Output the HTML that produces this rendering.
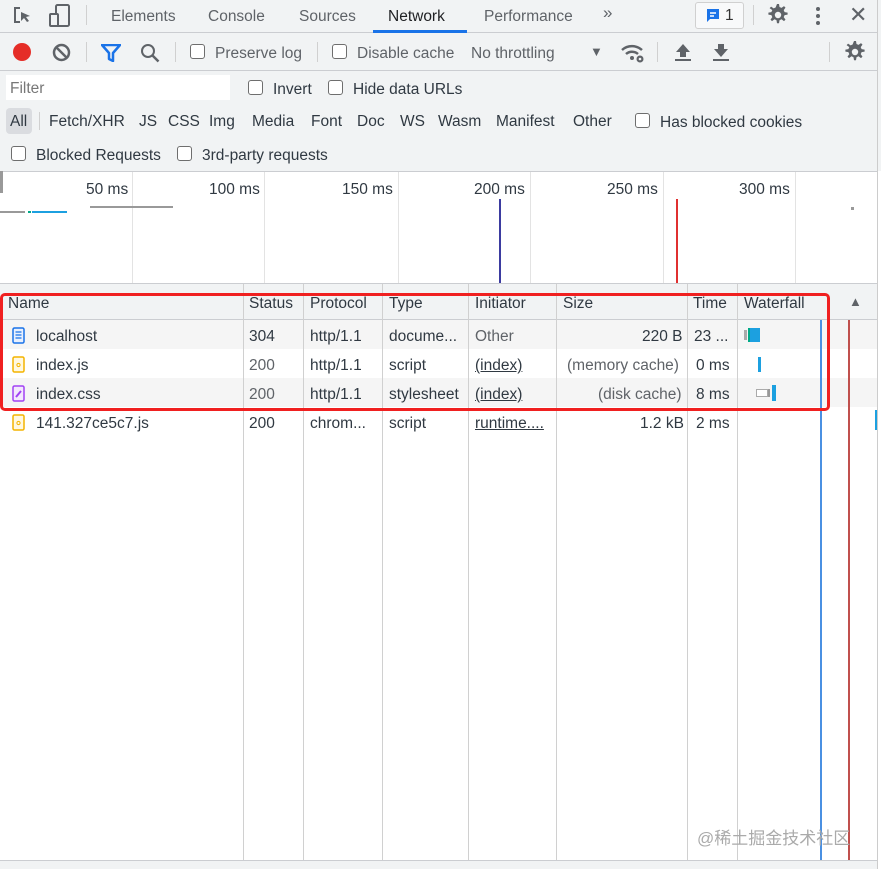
<!DOCTYPE html>
<html><head><meta charset="utf-8"><style>
*{box-sizing:border-box;margin:0;padding:0}
body{width:881px;height:869px;background:#fff;font-family:"Liberation Sans","Noto Sans CJK SC",sans-serif;font-size:15.5px;color:#303942;position:relative;overflow:hidden}
.a{position:absolute;white-space:nowrap}
.t{margin-top:1px}
.g{color:#5f6368}
.cb{position:absolute;width:15px;height:15px;border:1.5px solid #6e6e6e;border-radius:3px;background:#fff}
.vl{position:absolute;width:1px;background:#d0d0d0}
.hl{position:absolute;height:1px;background:#cbcdd1}
u{text-decoration:underline}
</style></head><body>
<svg width="0" height="0" style="position:absolute"><defs><g id="gear"><path d="M10 0l2 0 .5 3 2 .9 2.5-1.8 1.5 1.5-1.8 2.5.9 2 3 .5v2l-3 .5-.9 2 1.8 2.5-1.5 1.5-2.5-1.8-2 .9-.5 3h-2l-.5-3-2-.9-2.5 1.8-1.5-1.5 1.8-2.5-.9-2-3-.5v-2l3-.5.9-2L2.6 4.1 4.1 2.6l2.5 1.8 2-.9z" fill="#5f6368"/><circle cx="11" cy="11" r="3.2" fill="#f1f3f4"/></g></defs></svg>
<div class="a" style="left:0;top:0;width:881px;height:171px;background:#f1f3f4"></div>
<div class="hl" style="left:0;top:32px;width:877px"></div>
<div class="hl" style="left:0;top:70px;width:877px"></div>
<div class="vl" style="left:877px;top:0;height:869px;background:#ccc"></div>
<svg class="a" style="left:12px;top:5px" width="22" height="22" viewBox="0 0 22 22"><path d="M8 3H3v14h5" fill="none" stroke="#5f6368" stroke-width="2"/><path d="M9 7l9 4-4 1 3 4-2 1-3-4-3 3z" fill="#5f6368"/></svg>
<svg class="a" style="left:48px;top:4px" width="24" height="24" viewBox="0 0 24 24"><rect x="8" y="1" width="13" height="21" rx="1.5" fill="none" stroke="#5f6368" stroke-width="2"/><rect x="2" y="10" width="8" height="12" rx="1" fill="#f1f3f4" stroke="#5f6368" stroke-width="2"/></svg>
<div class="vl" style="left:86px;top:5px;height:20px"></div>
<div class="a g t" style="left:111px;top:7px">Elements</div>
<div class="a g t" style="left:208px;top:7px">Console</div>
<div class="a g t" style="left:299px;top:7px">Sources</div>
<div class="a t" style="left:388px;top:7px;color:#202124">Network</div>
<div class="a" style="left:373px;top:30px;width:94px;height:3px;background:#1a73e8"></div>
<div class="a g t" style="left:484px;top:7px">Performance</div>
<div class="a g" style="left:603px;top:3px;font-size:17px">»</div>
<div class="a" style="left:695px;top:2px;width:49px;height:27px;border:1px solid #d0d0d0;border-radius:3px;background:#f8f9fa"></div>
<svg class="a" style="left:705px;top:8px" width="16" height="16" viewBox="0 0 16 16"><path d="M2 1h12v10H5l-3 3z" fill="#1a73e8"/><path d="M5 5h6M5 8h4" stroke="#fff" stroke-width="1.5"/></svg>
<div class="a t" style="left:725px;top:6px;color:#333">1</div>
<div class="vl" style="left:753px;top:5px;height:20px"></div>
<svg class="a" style="left:767px;top:4px" width="22" height="22" viewBox="0 0 22 22"><use href="#gear"/></svg>
<svg class="a" style="left:814px;top:5px" width="8" height="22" viewBox="0 0 8 22"><circle cx="4" cy="4" r="2" fill="#5f6368"/><circle cx="4" cy="11" r="2" fill="#5f6368"/><circle cx="4" cy="18" r="2" fill="#5f6368"/></svg>
<div class="a g" style="left:849px;top:2px;font-size:22px">✕</div>
<div class="a" style="left:13px;top:43px;width:18px;height:18px;border-radius:50%;background:#e52d27"></div>
<svg class="a" style="left:52px;top:43px" width="19" height="19" viewBox="0 0 19 19"><circle cx="9.5" cy="9.5" r="7.5" fill="none" stroke="#5f6368" stroke-width="2.5"/><path d="M4.5 4.5l10 10" stroke="#5f6368" stroke-width="2.5"/></svg>
<div class="vl" style="left:86px;top:42px;height:20px"></div>
<svg class="a" style="left:101px;top:44px" width="20" height="18" viewBox="0 0 20 18"><path d="M1 1h18l-7 8v8l-4-2V9z" fill="none" stroke="#1a73e8" stroke-width="2.5" stroke-linejoin="round"/></svg>
<svg class="a" style="left:140px;top:43px" width="20" height="20" viewBox="0 0 20 20"><circle cx="8" cy="8" r="6" fill="none" stroke="#5f6368" stroke-width="2"/><path d="M12.5 12.5l6 6" stroke="#5f6368" stroke-width="2.5"/></svg>
<div class="vl" style="left:175px;top:42px;height:20px"></div>
<div class="cb" style="left:190px;top:44px"></div>
<div class="a g t" style="left:215px;top:44px">Preserve log</div>
<div class="vl" style="left:317px;top:42px;height:20px"></div>
<div class="cb" style="left:332px;top:44px"></div>
<div class="a g t" style="left:357px;top:44px">Disable cache</div>
<div class="a g t" style="left:471px;top:44px">No throttling</div>
<div class="a g" style="left:590px;top:44px;font-size:13px">▼</div>
<svg class="a" style="left:620px;top:42px" width="26" height="22" viewBox="0 0 26 22"><path d="M2 8a15 15 0 0 1 20 0M6 12a9 9 0 0 1 12 0" fill="none" stroke="#5f6368" stroke-width="2.5"/><circle cx="12" cy="16" r="2" fill="#5f6368"/><circle cx="20" cy="17" r="3.5" fill="#5f6368"/><circle cx="20" cy="17" r="1.3" fill="#f1f3f4"/></svg>
<div class="vl" style="left:657px;top:42px;height:20px"></div>
<svg class="a" style="left:674px;top:43px" width="18" height="19" viewBox="0 0 18 19"><path d="M9 1l7 8h-4v5H6V9H2z" fill="#5f6368"/><rect x="1" y="16" width="16" height="2" fill="#5f6368"/></svg>
<svg class="a" style="left:712px;top:43px" width="18" height="19" viewBox="0 0 18 19"><path d="M9 14l7-8h-4V1H6v5H2z" fill="#5f6368"/><rect x="1" y="16" width="16" height="2" fill="#5f6368"/></svg>
<div class="vl" style="left:829px;top:42px;height:20px"></div>
<svg class="a" style="left:844px;top:41px" width="22" height="22" viewBox="0 0 22 22"><use href="#gear"/></svg>
<div class="a" style="left:6px;top:75px;width:224px;height:25px;background:#fff"></div>
<div class="a t" style="left:10px;top:79px;color:#777">Filter</div>
<div class="cb" style="left:248px;top:80px"></div>
<div class="a t" style="left:273px;top:80px">Invert</div>
<div class="cb" style="left:328px;top:80px"></div>
<div class="a t" style="left:353px;top:80px">Hide data URLs</div>
<div class="a" style="left:6px;top:108px;width:26px;height:26px;background:#dadce0;border-radius:4px"></div>
<div class="a t" style="left:10px;top:112px">All</div>
<div class="vl" style="left:39px;top:112px;height:18px"></div>
<div class="a t" style="left:49px;top:112px">Fetch/XHR</div>
<div class="a t" style="left:139px;top:112px">JS</div>
<div class="a t" style="left:168px;top:112px">CSS</div>
<div class="a t" style="left:209px;top:112px">Img</div>
<div class="a t" style="left:252px;top:112px">Media</div>
<div class="a t" style="left:311px;top:112px">Font</div>
<div class="a t" style="left:357px;top:112px">Doc</div>
<div class="a t" style="left:400px;top:112px">WS</div>
<div class="a t" style="left:438px;top:112px">Wasm</div>
<div class="a t" style="left:496px;top:112px">Manifest</div>
<div class="a t" style="left:573px;top:112px">Other</div>
<div class="cb" style="left:635px;top:113px"></div>
<div class="a t" style="left:660px;top:113px">Has blocked cookies</div>
<div class="cb" style="left:11px;top:146px"></div>
<div class="a t" style="left:36px;top:146px">Blocked Requests</div>
<div class="cb" style="left:177px;top:146px"></div>
<div class="a t" style="left:202px;top:146px">3rd-party requests</div>
<div class="hl" style="left:0;top:171px;width:877px"></div>
<div class="a" style="left:0;top:171px;width:3px;height:22px;background:#999"></div>
<div class="vl" style="left:132px;top:172px;height:111px;background:#e3e3e3"></div>
<div class="vl" style="left:264px;top:172px;height:111px;background:#e3e3e3"></div>
<div class="vl" style="left:398px;top:172px;height:111px;background:#e3e3e3"></div>
<div class="vl" style="left:530px;top:172px;height:111px;background:#e3e3e3"></div>
<div class="vl" style="left:663px;top:172px;height:111px;background:#e3e3e3"></div>
<div class="vl" style="left:795px;top:172px;height:111px;background:#e3e3e3"></div>
<div class="a t" style="left:86px;top:180px">50 ms</div>
<div class="a t" style="left:209px;top:180px">100 ms</div>
<div class="a t" style="left:342px;top:180px">150 ms</div>
<div class="a t" style="left:474px;top:180px">200 ms</div>
<div class="a t" style="left:607px;top:180px">250 ms</div>
<div class="a t" style="left:739px;top:180px">300 ms</div>
<div class="a" style="left:0;top:211px;width:25px;height:2px;background:#999"></div>
<div class="a" style="left:28px;top:211px;width:3px;height:2px;background:#0a8"></div>
<div class="a" style="left:32px;top:211px;width:35px;height:2px;background:#1ca0e0"></div>
<div class="a" style="left:90px;top:206px;width:83px;height:2px;background:#999"></div>
<div class="a" style="left:499px;top:199px;width:1.5px;height:84px;background:#3b3ba0"></div>
<div class="a" style="left:676px;top:199px;width:1.5px;height:84px;background:#e03030"></div>
<div class="a" style="left:851px;top:207px;width:3px;height:3px;background:#999"></div>
<div class="a" style="left:0;top:283px;width:877px;height:37px;background:#f1f3f4;border-top:1px solid #cbcdd1;border-bottom:1px solid #cbcdd1"></div>
<div class="a" style="left:0;top:320px;width:877px;height:29px;background:#f5f5f5"></div>
<div class="a" style="left:0;top:378px;width:877px;height:29px;background:#f5f5f5"></div>
<div class="vl" style="left:243px;top:284px;height:576px"></div>
<div class="vl" style="left:303px;top:284px;height:576px"></div>
<div class="vl" style="left:382px;top:284px;height:576px"></div>
<div class="vl" style="left:468px;top:284px;height:576px"></div>
<div class="vl" style="left:556px;top:284px;height:576px"></div>
<div class="vl" style="left:687px;top:284px;height:576px"></div>
<div class="vl" style="left:737px;top:284px;height:576px"></div>
<div class="a" style="left:0;top:860px;width:877px;height:9px;background:#f1f3f4;border-top:1px solid #cbcdd1"></div>
<div class="a t" style="left:8px;top:294px">Name</div>
<div class="a t" style="left:249px;top:294px;width:52px;overflow:hidden">Status</div>
<div class="a t" style="left:310px;top:294px">Protocol</div>
<div class="a t" style="left:389px;top:294px">Type</div>
<div class="a t" style="left:475px;top:294px">Initiator</div>
<div class="a t" style="left:563px;top:294px">Size</div>
<div class="a t" style="left:693px;top:294px;width:42px;overflow:hidden">Time</div>
<div class="a t" style="left:744px;top:294px">Waterfall</div>
<div class="a g" style="left:849px;top:294px;font-size:13px">▲</div>
<div class="a" style="left:820px;top:320px;width:2px;height:540px;background:#4a90e2"></div>
<div class="a" style="left:848px;top:320px;width:1.5px;height:540px;background:#c0504d"></div>
<div class="a" style="left:875px;top:410px;width:1.5px;height:20px;background:#1ca0e0"></div>
<svg class="a" style="left:12px;top:327px" width="13" height="17" viewBox="0 0 13 17"><rect x="1" y="1" width="11" height="15" rx="1.5" fill="#e8f0fe" stroke="#1a73e8" stroke-width="1.5"/><path d="M3.5 5h6M3.5 8h6M3.5 11h6" stroke="#1a73e8" stroke-width="1.3"/></svg>
<div class="a t" style="left:36px;top:327px">localhost</div>
<div class="a t" style="left:249px;top:327px">304</div>
<div class="a t" style="left:310px;top:327px">http/1.1</div>
<div class="a t" style="left:389px;top:327px">docume...</div>
<div class="a g t" style="left:475px;top:327px">Other</div>
<div class="a t" style="left:642px;top:327px">220 B</div>
<div class="a t" style="left:694px;top:327px">23 ...</div>
<div class="a" style="left:744px;top:330px;width:3px;height:10px;background:#aaa"></div>
<div class="a" style="left:748px;top:328px;width:2px;height:14px;background:#0a8"></div>
<div class="a" style="left:750px;top:328px;width:10px;height:14px;background:#1ca0e0"></div>
<svg class="a" style="left:12px;top:356px" width="13" height="17" viewBox="0 0 13 17"><rect x="1" y="1" width="11" height="15" rx="1.5" fill="#fff8e1" stroke="#f4b400" stroke-width="1.5"/><circle cx="6.5" cy="9" r="1.6" fill="none" stroke="#f4b400"/></svg>
<div class="a t" style="left:36px;top:356px">index.js</div>
<div class="a g t" style="left:249px;top:356px">200</div>
<div class="a t" style="left:310px;top:356px">http/1.1</div>
<div class="a t" style="left:389px;top:356px">script</div>
<div class="a t" style="left:475px;top:356px"><u>(index)</u></div>
<div class="a g t" style="left:567px;top:356px">(memory cache)</div>
<div class="a t" style="left:696px;top:356px">0 ms</div>
<div class="a" style="left:758px;top:357px;width:3px;height:15px;background:#1ca0e0"></div>
<svg class="a" style="left:12px;top:385px" width="13" height="17" viewBox="0 0 13 17"><rect x="1" y="1" width="11" height="15" rx="1.5" fill="#f3e8fd" stroke="#a142f4" stroke-width="1.5"/><path d="M4 12l5-6" stroke="#a142f4" stroke-width="2"/></svg>
<div class="a t" style="left:36px;top:385px">index.css</div>
<div class="a g t" style="left:249px;top:385px">200</div>
<div class="a t" style="left:310px;top:385px">http/1.1</div>
<div class="a t" style="left:389px;top:385px">stylesheet</div>
<div class="a t" style="left:475px;top:385px"><u>(index)</u></div>
<div class="a g t" style="left:598px;top:385px">(disk cache)</div>
<div class="a t" style="left:696px;top:385px">8 ms</div>
<div class="a" style="left:756px;top:389px;width:12px;height:8px;border:1px solid #aaa;background:#fff"></div>
<div class="a" style="left:768px;top:389px;width:2px;height:8px;background:#999"></div>
<div class="a" style="left:772px;top:385px;width:4px;height:16px;background:#1ca0e0"></div>
<svg class="a" style="left:12px;top:414px" width="13" height="17" viewBox="0 0 13 17"><rect x="1" y="1" width="11" height="15" rx="1.5" fill="#fff8e1" stroke="#f4b400" stroke-width="1.5"/><circle cx="6.5" cy="9" r="1.6" fill="none" stroke="#f4b400"/></svg>
<div class="a t" style="left:36px;top:414px">141.327ce5c7.js</div>
<div class="a t" style="left:249px;top:414px">200</div>
<div class="a t" style="left:310px;top:414px">chrom...</div>
<div class="a t" style="left:389px;top:414px">script</div>
<div class="a t" style="left:475px;top:414px"><u>runtime....</u></div>
<div class="a t" style="left:640px;top:414px">1.2 kB</div>
<div class="a t" style="left:696px;top:414px">2 ms</div>
<div class="a" style="left:0;top:293px;width:830px;height:118px;border:3px solid #f02020;border-radius:5px"></div>
<div class="a" style="left:697px;top:824px;color:#aaa;font-size:17px">@稀土掘金技术社区</div>
</body></html>
